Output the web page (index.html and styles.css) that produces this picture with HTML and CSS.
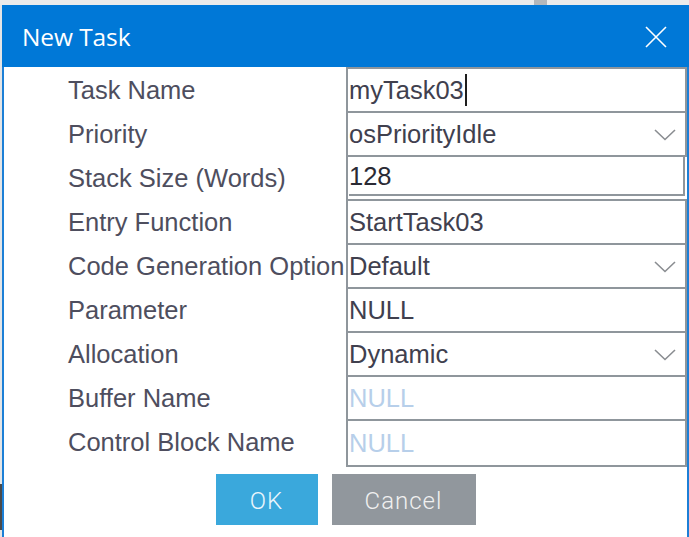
FILE: index.html
```html
<!DOCTYPE html>
<html>
<head>
<meta charset="utf-8">
<title>New Task</title>
<link rel="stylesheet" href="styles.css">
</head>
<body>
<div class="topstrip"><span class="strip-block"></span></div>
<div class="side-mark"></div>
<div class="dialog">
  <div class="titlebar">
    <span class="title">New Task</span>
    <svg class="close" width="22" height="22" viewBox="0 0 22 22"><path d="M1 1 L21 21 M21 1 L1 21" stroke="#ffffff" stroke-width="1.6" fill="none"/></svg>
  </div>
  <div class="body">
    <div class="form">
      <div class="label">Task Name</div>
      <div class="field"><span class="val">myTask03</span><span class="caret"></span></div>

      <div class="label">Priority</div>
      <div class="field select"><span class="val">osPriorityIdle</span><svg class="chev" width="22" height="12" viewBox="0 0 22 12"><path d="M1 1 L11 10.5 L21 1" stroke="#8a8d91" stroke-width="1.6" fill="none"/></svg></div>

      <div class="label">Stack Size (Words)</div>
      <div class="field stack"><div class="stack-inner"><span class="val dark">128</span></div></div>

      <div class="label">Entry Function</div>
      <div class="field"><span class="val">StartTask03</span></div>

      <div class="label">Code Generation Option</div>
      <div class="field select"><span class="val">Default</span><svg class="chev" width="22" height="12" viewBox="0 0 22 12"><path d="M1 1 L11 10.5 L21 1" stroke="#8a8d91" stroke-width="1.6" fill="none"/></svg></div>

      <div class="label">Parameter</div>
      <div class="field"><span class="val">NULL</span></div>

      <div class="label">Allocation</div>
      <div class="field select"><span class="val">Dynamic</span><svg class="chev" width="22" height="12" viewBox="0 0 22 12"><path d="M1 1 L11 10.5 L21 1" stroke="#8a8d91" stroke-width="1.6" fill="none"/></svg></div>

      <div class="label">Buffer Name</div>
      <div class="field"><span class="val ph">NULL</span></div>

      <div class="label">Control Block Name</div>
      <div class="field last"><span class="val ph">NULL</span></div>
    </div>
    <div class="buttons">
      <button class="btn ok">OK</button>
      <button class="btn cancel">Cancel</button>
    </div>
  </div>
</div>
</body>
</html>
```

FILE: styles.css
```css
html, body {
  margin: 0;
  padding: 0;
  background: #e4e5e6;
  overflow: hidden;
}
body {
  width: 689px;
  height: 537px;
  position: relative;
  font-family: "Liberation Sans", Arial, sans-serif;
}
.topstrip {
  height: 5px;
  background: #ebebeb;
  position: relative;
}
.strip-block {
  position: absolute;
  left: 534px;
  top: 0;
  width: 13px;
  height: 5px;
  background: #b3b7bb;
}
.side-mark {
  position: absolute;
  left: 0;
  top: 484px;
  width: 2px;
  height: 46px;
  background: #4a4a4a;
}
.dialog {
  margin-left: 2px;
  width: 683px;
  border-left: 2px solid #1c7fd6;
  border-right: 2px solid #1c7fd6;
  background: #ffffff;
  height: 532px;
}
.titlebar {
  height: 62px;
  background: #0078d7;
  margin: 0 -2px;
  padding: 0 22px 0 20px;
  display: flex;
  align-items: center;
  justify-content: space-between;
}
.title {
  font-family: "Open Sans", "Noto Sans", sans-serif;
  font-size: 24.5px;
  color: #ffffff;
  letter-spacing: -0.1px;
}
.close {
  display: block;
  margin-top: 1px;
}
.body {
  background: #ffffff;
}
.form {
  display: grid;
  grid-template-columns: 342px 341px;
  grid-auto-rows: 44px;
}
.label {
  padding-left: 64px;
  font-size: 25.5px;
  line-height: 46px;
  color: #4e4e5e;
  white-space: nowrap;
  overflow: visible;
}
.field {
  border-top: 2px solid #8f969c;
  border-left: 2px solid #8f969c;
  border-right: 2px solid #8f969c;
  display: flex;
  align-items: center;
  padding-left: 1px;
  padding-right: 9px;
  background: #ffffff;
  min-width: 0;
}
.field.last {
  border-bottom: 2px solid #8f969c;
  height: 44px;
}
.field.select {
  justify-content: space-between;
}
.val {
  font-size: 25.5px;
  line-height: 42px;
  color: #40404e;
  white-space: nowrap;
}
.val.dark {
  color: #2a2a34;
}
.val.ph {
  color: #b7cfea;
}
.caret {
  display: inline-block;
  width: 2px;
  height: 32px;
  background: #1e1e1e;
  margin-left: 1px;
}
.chev {
  display: block;
  margin-top: 2px;
}
.field.stack {
  border-right: none;
  padding: 0;
  align-items: stretch;
}
.stack-inner {
  flex: 1;
  margin-left: 1px;
  margin-right: 2px;
  border-right: 2px solid #8f969c;
  border-bottom: 2px solid #8f969c;
  height: 37px;
  display: flex;
  align-items: center;
}
.buttons {
  display: flex;
  justify-content: center;
  gap: 14px;
  margin-top: 11px;
}
.btn {
  border: none;
  height: 51px;
  font-family: Roboto, "Liberation Sans", sans-serif;
  font-weight: 300;
  font-size: 24px;
  letter-spacing: 1px;
  padding: 0;
  padding-top: 2px;
  cursor: pointer;
}
.btn.ok {
  width: 102px;
  background: #3aa8dc;
  color: #eaf6fc;
}
.btn.cancel {
  width: 144px;
  background: #91979d;
  color: #f0f0f0;
}
```
